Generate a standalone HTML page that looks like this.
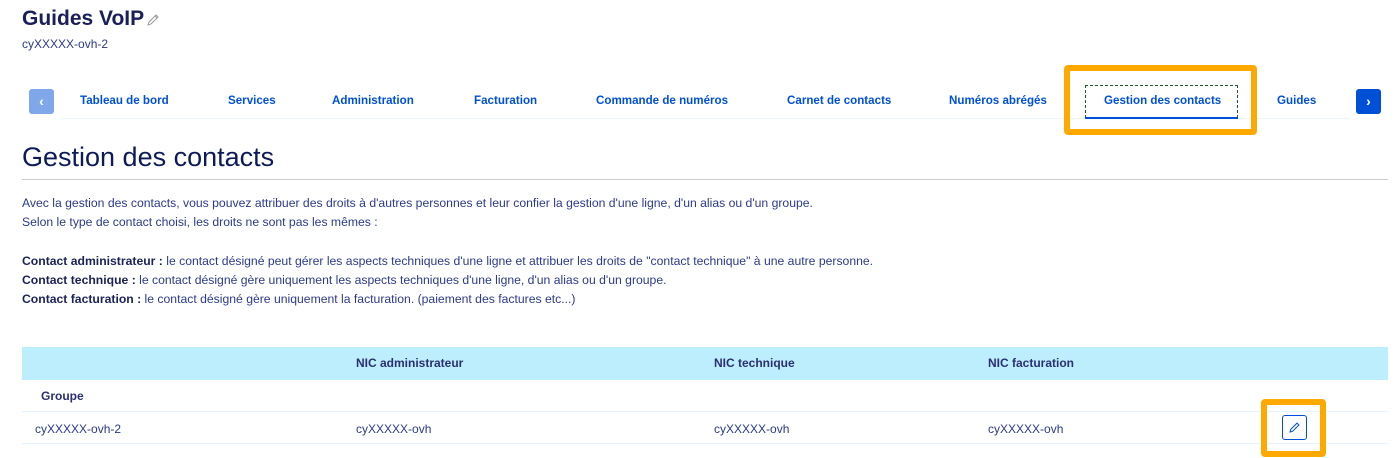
<!DOCTYPE html>
<html><head><meta charset="utf-8"><style>
*{margin:0;padding:0;box-sizing:border-box}
body{width:1400px;height:458px;background:#fff;font-family:"Liberation Sans",sans-serif;color:#2b3a8c;position:relative;overflow:hidden}
.a{position:absolute;white-space:nowrap}
h1{position:absolute;left:22px;top:7px;font-size:21px;font-weight:bold;color:#1a1f5c}
.nav{font-size:11.6px;font-weight:bold;color:#0050d7;top:94px}
.p{font-size:12.2px;left:22px;color:#2b3a8c}
.p b{color:#1a2257}
.th{font-size:12px;font-weight:bold;color:#2b2f73;top:356px}
.td{font-size:12px;color:#2b3a8c;top:422px}
</style></head><body>
<h1>Guides VoIP</h1>
<svg class="a" style="left:146px;top:13px" width="14" height="14" viewBox="0 0 14 14"><path d="M2 12l1-3 7-7 2 2-7 7z M9 3l2 2" fill="none" stroke="#999" stroke-width="1"/></svg>
<div class="a" style="left:22px;top:37px;font-size:12px;color:#2b3a8c">cyXXXXX-ovh-2</div>

<div class="a" style="left:29px;top:89px;width:25px;height:25px;background:#7fa7ea;border-radius:3px;color:#fff;font-size:14px;font-weight:bold;text-align:center;line-height:24px">‹</div>
<div class="a" style="left:60px;top:118px;width:1290px;height:1px;background:#eef5fb"></div>
<div class="a nav" style="left:80px">Tableau de bord</div>
<div class="a nav" style="left:228px">Services</div>
<div class="a nav" style="left:332px">Administration</div>
<div class="a nav" style="left:474px">Facturation</div>
<div class="a nav" style="left:596px">Commande de numéros</div>
<div class="a nav" style="left:787px">Carnet de contacts</div>
<div class="a nav" style="left:949px">Numéros abrégés</div>
<div class="a" style="left:1064px;top:65px;width:193px;height:70px;border:6px solid #ffa800;border-radius:4px"></div>
<div class="a" style="left:1085px;top:85px;width:153px;height:33px;border:1px dashed #1e5a2a"></div>
<div class="a" style="left:1085px;top:117px;width:153px;height:2px;background:#0050d7"></div>
<div class="a nav" style="left:1104px">Gestion des contacts</div>
<div class="a nav" style="left:1277px">Guides</div>
<div class="a" style="left:1356px;top:89px;width:25px;height:25px;background:#0050d7;border-radius:3px;color:#fff;font-size:14px;font-weight:bold;text-align:center;line-height:24px">›</div>

<div class="a" style="left:22px;top:142px;font-size:27px;color:#0c1a5a">Gestion des contacts</div>
<div class="a" style="left:22px;top:179px;width:1366px;height:1px;background:#ccc"></div>
<div class="a p" style="top:196px">Avec la gestion des contacts, vous pouvez attribuer des droits à d'autres personnes et leur confier la gestion d'une ligne, d'un alias ou d'un groupe.</div>
<div class="a p" style="top:215px">Selon le type de contact choisi, les droits ne sont pas les mêmes :</div>
<div class="a p" style="top:254px"><b>Contact administrateur :</b> le contact désigné peut gérer les aspects techniques d'une ligne et attribuer les droits de "contact technique" à une autre personne.</div>
<div class="a p" style="top:273px"><b>Contact technique :</b> le contact désigné gère uniquement les aspects techniques d'une ligne, d'un alias ou d'un groupe.</div>
<div class="a p" style="top:292px"><b>Contact facturation :</b> le contact désigné gère uniquement la facturation. (paiement des factures etc...)</div>

<div class="a" style="left:22px;top:347px;width:1366px;height:33px;background:#bdeefd"></div>
<div class="a th" style="left:356px">NIC administrateur</div>
<div class="a th" style="left:714px">NIC technique</div>
<div class="a th" style="left:988px">NIC facturation</div>
<div class="a th" style="left:41px;top:389px">Groupe</div>
<div class="a" style="left:22px;top:411px;width:1366px;height:1px;background:#e3f6fd"></div>
<div class="a" style="left:22px;top:443px;width:1366px;height:1px;background:#e3f6fd"></div>
<div class="a td" style="left:35px">cyXXXXX-ovh-2</div>
<div class="a td" style="left:356px">cyXXXXX-ovh</div>
<div class="a td" style="left:714px">cyXXXXX-ovh</div>
<div class="a td" style="left:988px">cyXXXXX-ovh</div>
<div class="a" style="left:1261px;top:399px;width:65px;height:58px;border:6px solid #ffa800;border-radius:4px"></div>
<div class="a" style="left:1282px;top:415px;width:25px;height:25px;border:1px solid #0050d7;border-radius:3px"></div>
<svg class="a" style="left:1288px;top:421px" width="13" height="13" viewBox="0 0 13 13"><path d="M2 11l.7-2.6 6.3-6.3 1.9 1.9-6.3 6.3z" fill="none" stroke="#0050d7" stroke-width="1"/></svg>
</body></html>
